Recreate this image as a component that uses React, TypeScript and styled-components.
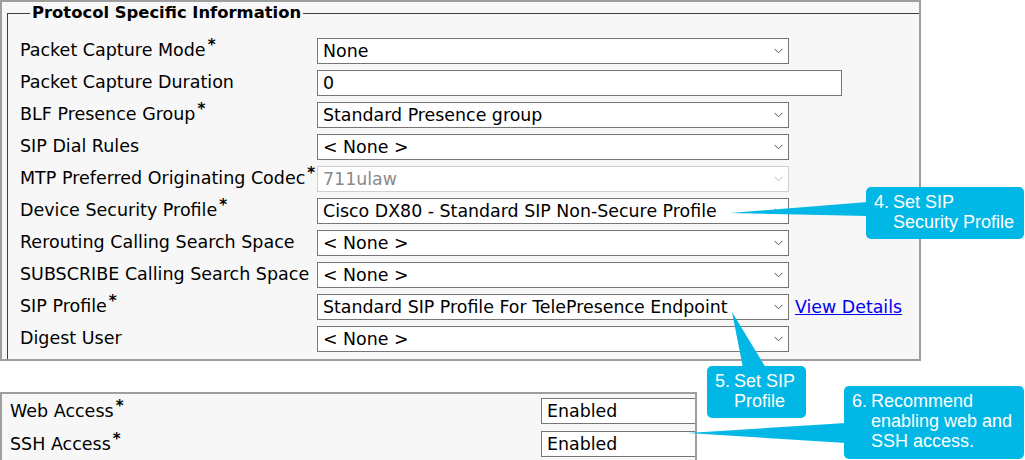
import React from 'react'
import styled, { createGlobalStyle } from 'styled-components'

const CALLOUT = '#00b7e6'
const FRAME = '#9e9e9e'

type Field = {
  readonly label: string
  readonly value: string
  readonly required?: boolean
  readonly kind?: 'select' | 'input'
  readonly disabled?: boolean
  readonly link?: string
}

const fields: Field[] = [
  { label: 'Packet Capture Mode', value: 'None', required: true },
  { label: 'Packet Capture Duration', value: '0', kind: 'input' },
  { label: 'BLF Presence Group', value: 'Standard Presence group', required: true },
  { label: 'SIP Dial Rules', value: '< None >' },
  { label: 'MTP Preferred Originating Codec', value: '711ulaw', required: true, disabled: true },
  { label: 'Device Security Profile', value: 'Cisco DX80 - Standard SIP Non-Secure Profile', required: true },
  { label: 'Rerouting Calling Search Space', value: '< None >' },
  { label: 'SUBSCRIBE Calling Search Space', value: '< None >' },
  { label: 'SIP Profile', value: 'Standard SIP Profile For TelePresence Endpoint', required: true, link: 'View Details' },
  { label: 'Digest User', value: '< None >' },
]

const accessFields = [
  { label: 'Web Access', value: 'Enabled' },
  { label: 'SSH Access', value: 'Enabled' },
]

type Note = {
  readonly num: string
  readonly lines: string[]
  readonly top: number
  readonly left: number
  readonly width: number
  readonly height: number
}

const notes: Note[] = [
  { num: '4.', lines: ['Set SIP', 'Security Profile'], top: 187, left: 866, width: 158, height: 52 },
  { num: '5.', lines: ['Set SIP', 'Profile'], top: 366, left: 707, width: 99, height: 52 },
  { num: '6.', lines: ['Recommend', 'enabling web and', 'SSH access.'], top: 386, left: 844, width: 180, height: 73 },
]

const Chevron: React.FC<{ faded?: boolean }> = ({ faded }) => (
  <svg width="9" height="6" viewBox="0 0 9 6">
    <polyline points="0.5,0.8 4.5,4.8 8.5,0.8" fill="none" stroke={faded ? '#bbb' : '#555'} strokeWidth="1" />
  </svg>
)

const App: React.FC = () => {
  return (
    <Page>
      <GlobalStyle />
      <MainPanel>
        <Fieldset>
          <Legend>Protocol Specific Information</Legend>
          <FormGrid>
            {fields.map(field => (
              <React.Fragment key={field.label}>
                <Label raise={2}>
                  {field.label}
                  {field.required && <Star>*</Star>}
                </Label>
                <ValueCell>
                  <Box width={field.kind === 'input' ? 525 : 472} disabled={field.disabled}>
                    <span>{field.value}</span>
                    {field.kind !== 'input' && <Chevron faded={field.disabled} />}
                  </Box>
                  {field.link && <DetailsLink href="#">{field.link}</DetailsLink>}
                </ValueCell>
              </React.Fragment>
            ))}
          </FormGrid>
        </Fieldset>
      </MainPanel>

      <AccessPanel>
        {accessFields.map(field => (
          <React.Fragment key={field.label}>
            <Label raise={0}>
              {field.label}
              <Star>*</Star>
            </Label>
            <Box width={200}>
              <span>{field.value}</span>
            </Box>
          </React.Fragment>
        ))}
      </AccessPanel>

      <Pointers width="1025" height="460" viewBox="0 0 1025 460">
        <polygon points="730,213 868,202 868,216" fill={CALLOUT} />
        <polygon points="732,312 743,368 766,368" fill={CALLOUT} />
        <polygon points="688,433 846,423 846,443" fill={CALLOUT} />
      </Pointers>

      {notes.map(note => (
        <Callout key={note.num} top={note.top} left={note.left} width={note.width} height={note.height}>
          <CalloutNum>{note.num}</CalloutNum>
          <CalloutText>
            {note.lines.map(line => (
              <div key={line}>{line}</div>
            ))}
          </CalloutText>
        </Callout>
      ))}
    </Page>
  )
}

export default App

const GlobalStyle = createGlobalStyle`
  html, body {
    margin: 0;
    background: #ffffff;
  }
  body {
    font-family: "DejaVu Sans", Verdana, sans-serif;
    color: #000;
  }
`

const Page = styled.div`
  position: relative;
  width: 1025px;
  height: 460px;
  overflow: hidden;
`

const MainPanel = styled.div`
  box-sizing: border-box;
  width: 921px;
  height: 361px;
  border: 2px solid ${FRAME};
  background: #f7f7f7;
  padding: 1px 0 0 5px;
`

const Fieldset = styled.fieldset`
  box-sizing: border-box;
  height: 100%;
  margin: 0;
  padding: 15px 0 0 12px;
  border-style: solid;
  border-color: #3c3c3c;
  border-width: 1px 0 0 1px;
`

const Legend = styled.legend`
  margin-left: 10px;
  padding: 0 2px;
  font-size: 16.4px;
  font-weight: bold;
  line-height: 20px;
`

const FormGrid = styled.div`
  display: grid;
  grid-template-columns: 297px auto;
  grid-auto-rows: 26px;
  row-gap: 6px;
`

type LabelProps = {
  readonly raise: number
}

const Label = styled.div<LabelProps>`
  align-self: center;
  margin-top: ${props => -props.raise}px;
  font-size: 17.5px;
  line-height: 20px;
  white-space: nowrap;
`

const Star = styled.span`
  position: relative;
  top: -6px;
  margin-left: 2px;
  font-size: 15px;
  font-weight: bold;
`

const ValueCell = styled.div`
  display: flex;
  align-items: center;
  gap: 6px;
`

type BoxProps = {
  readonly width: number
  readonly disabled?: boolean
}

const Box = styled.div<BoxProps>`
  box-sizing: border-box;
  display: flex;
  align-items: center;
  justify-content: space-between;
  width: ${props => props.width}px;
  height: 26px;
  padding: 0 5px;
  border: 1px solid ${props => props.disabled ? '#cfcfcf' : '#767676'};
  background: #ffffff;
  color: ${props => props.disabled ? '#8a8a8a' : '#000'};
  font-size: 17.4px;
  white-space: nowrap;
`

const DetailsLink = styled.a`
  color: #0000ee;
  font-size: 17.4px;
  text-decoration: underline;
`

const AccessPanel = styled.div`
  box-sizing: border-box;
  display: grid;
  grid-template-columns: 531px 200px;
  grid-auto-rows: 26px;
  row-gap: 7px;
  width: 697px;
  height: 80px;
  margin-top: 31px;
  padding: 4px 0 0 8px;
  border: 2px solid ${FRAME};
  border-bottom: none;
  background: #f7f7f7;
  overflow: hidden;
`

const Pointers = styled.svg`
  position: absolute;
  top: 0;
  left: 0;
  pointer-events: none;
`

type CalloutProps = {
  readonly top: number
  readonly left: number
  readonly width: number
  readonly height: number
}

const Callout = styled.div<CalloutProps>`
  position: absolute;
  box-sizing: border-box;
  top: ${props => props.top}px;
  left: ${props => props.left}px;
  width: ${props => props.width}px;
  height: ${props => props.height}px;
  display: flex;
  padding: 5px 0 0 8px;
  border-radius: 5px;
  background: ${CALLOUT};
  color: #ffffff;
  font-family: "Liberation Sans", Arial, sans-serif;
  font-size: 18px;
  line-height: 20px;
`

const CalloutNum = styled.div`
  width: 19px;
  flex: none;
`

const CalloutText = styled.div`
  white-space: nowrap;
`
